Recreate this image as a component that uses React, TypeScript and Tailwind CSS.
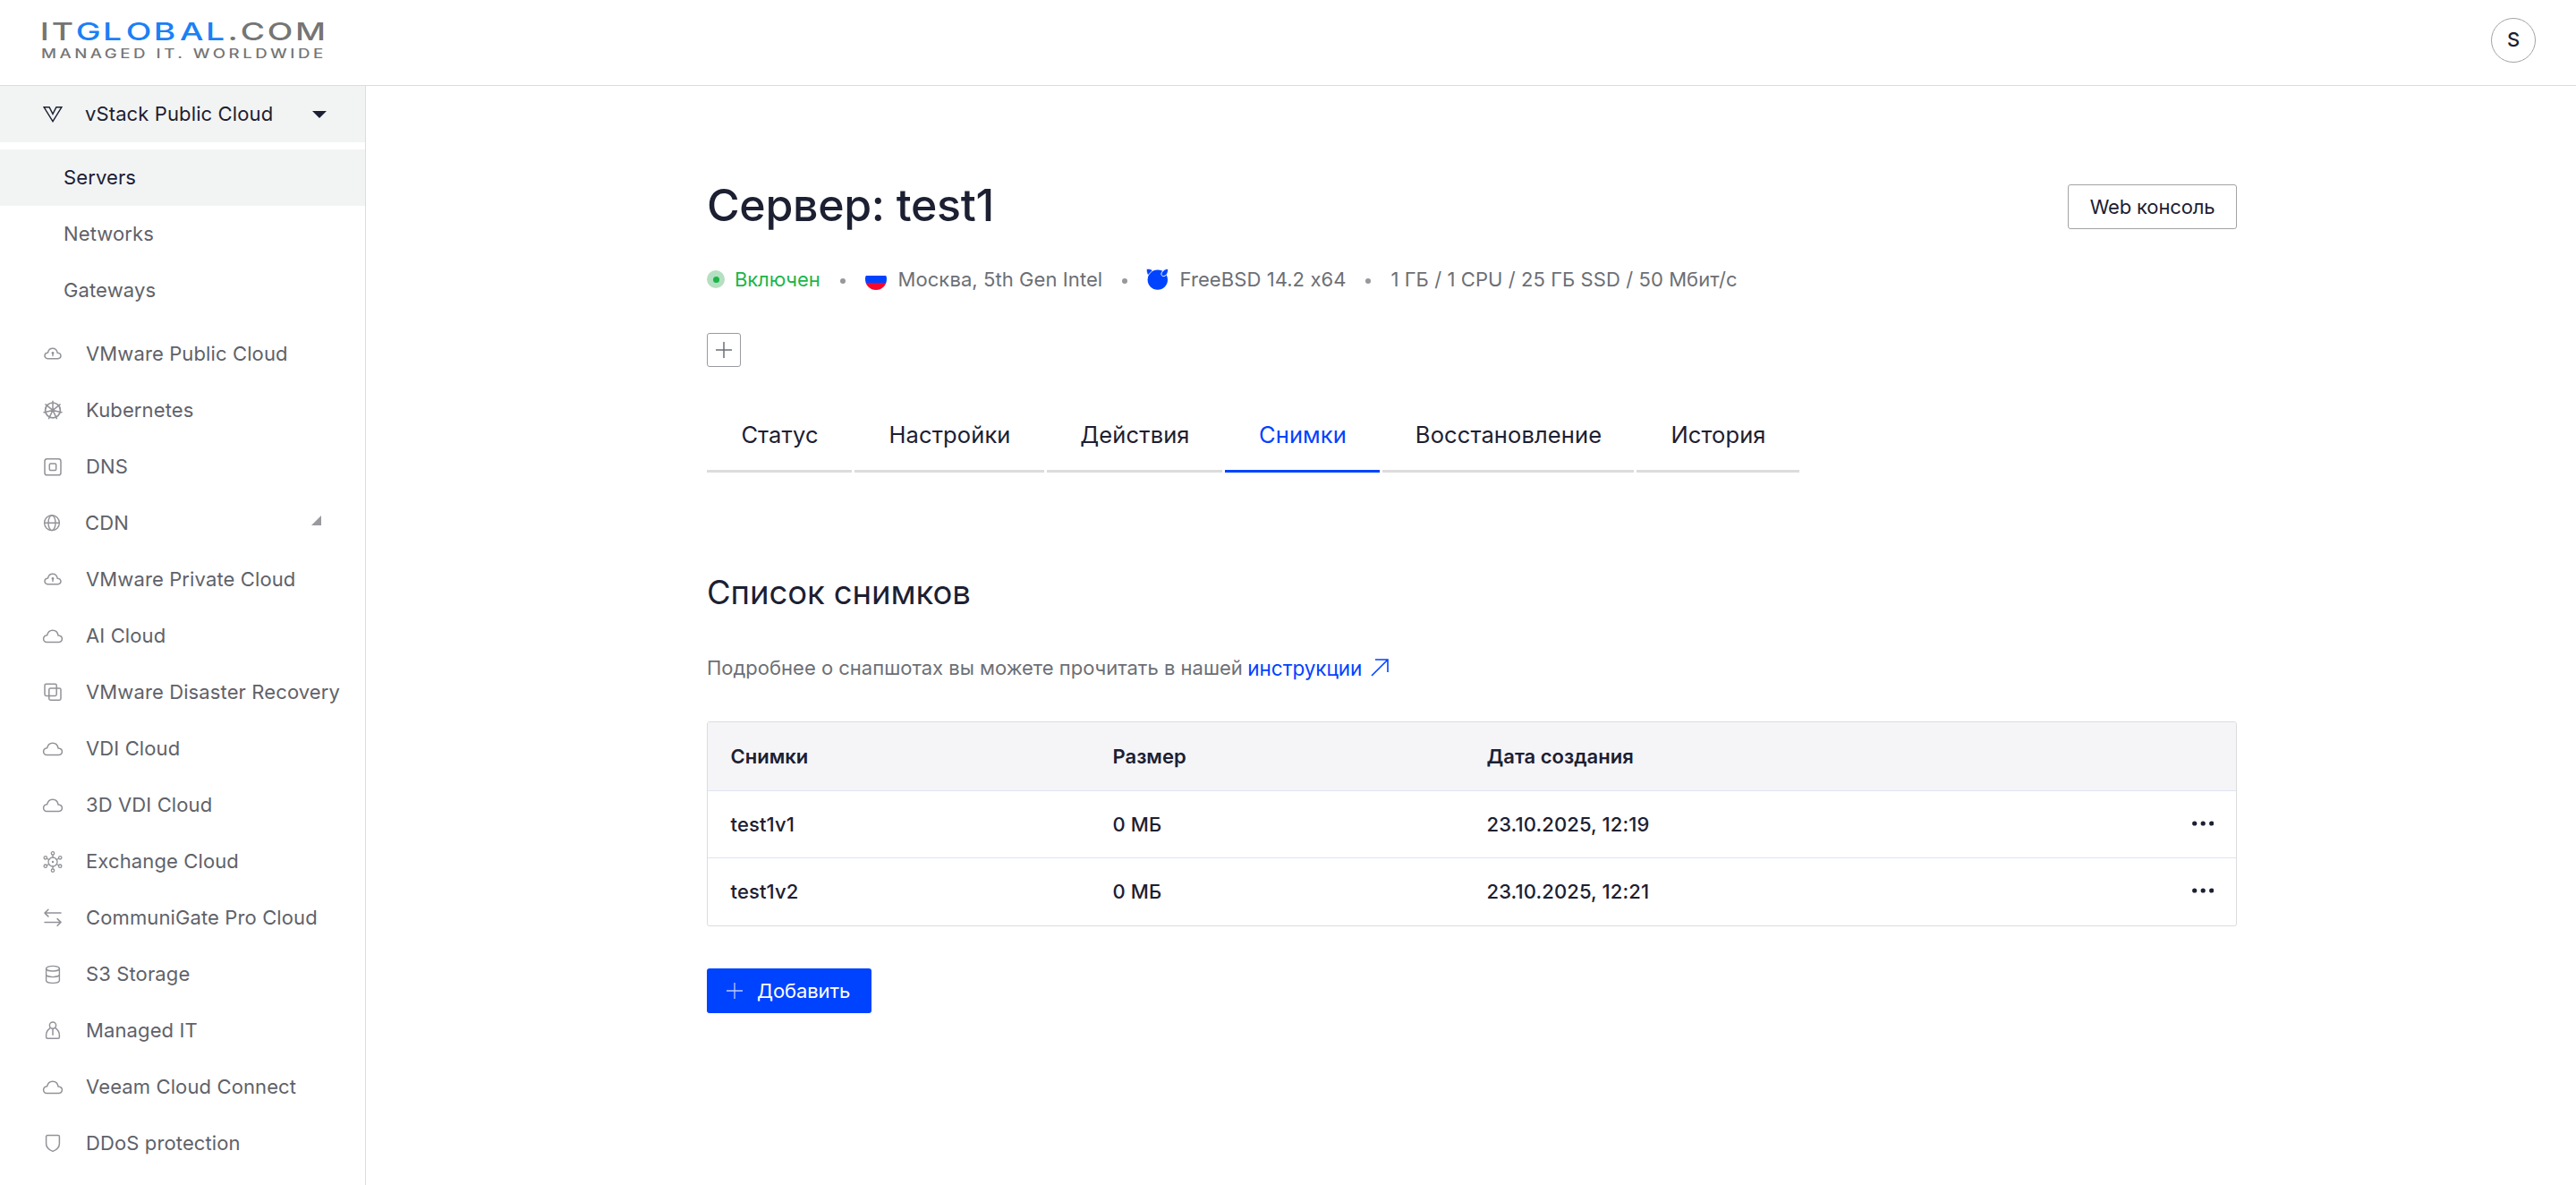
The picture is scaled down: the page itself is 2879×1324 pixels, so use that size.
import type { ReactNode } from "react";

const cloudPath =
  "M5.2 18.4h13.6a3.7 3.7 0 0 0 3.6-3.6c0-2.2-1.8-3.6-4.3-3.8C17.5 7.7 15 5.2 11.8 5.2c-3.1 0-5.4 2.1-6.1 5.5-2.4.3-4.1 1.8-4.1 4.1a3.6 3.6 0 0 0 3.6 3.6z";

function Icon({ children }: { children: ReactNode }) {
  return (
    <svg
      width="24"
      height="24"
      viewBox="0 0 24 24"
      fill="none"
      stroke="currentColor"
      strokeWidth="1.5"
      strokeLinecap="round"
      strokeLinejoin="round"
      className="shrink-0 text-[#919398]"
    >
      {children}
    </svg>
  );
}

const icons: Record<string, ReactNode> = {
  cloud: <path d={cloudPath} />,
  cloudLock: (
    <>
      <path d={cloudPath} transform="translate(1.6 0.8) scale(0.865)" strokeWidth="1.7" />
      <circle cx="12" cy="10.4" r="1.4" fill="currentColor" stroke="none" />
      <path d="M12 10.6v3" strokeWidth="1.4" />
    </>
  ),
  kubernetes: (
    <>
      <circle cx="12" cy="11.4" r="8.4" strokeWidth="1.7" />
      <circle cx="12" cy="11.4" r="1.6" fill="currentColor" stroke="none" />
      <path
        d="M12 11.4V1.3M12 11.4 3.9 4.9M12 11.4l8.1-6.5M12 11.4 2 13.7M12 11.4l10 2.3M12 11.4l-4.4 9.2M12 11.4l4.4 9.2"
        strokeWidth="1.5"
      />
    </>
  ),
  dns: (
    <>
      <rect x="3" y="2.8" width="18" height="18" rx="2.6" />
      <rect x="8.3" y="8.1" width="7.4" height="7.4" rx="1.2" />
    </>
  ),
  globe: (
    <>
      <circle cx="12" cy="11.2" r="8.4" strokeWidth="1.4" />
      <ellipse cx="12" cy="11.2" rx="4" ry="8.4" strokeWidth="1.4" />
      <path d="M3.6 11.2h16.8" strokeWidth="1.4" />
    </>
  ),
  squares: (
    <>
      <rect x="3" y="2.2" width="13.2" height="13.2" rx="1.6" />
      <rect x="7.8" y="7" width="13.2" height="13.2" rx="1.6" />
    </>
  ),
  exchange: (
    <>
      <circle cx="12" cy="12" r="5" strokeWidth="1.3" />
      <circle cx="12" cy="12" r="1.2" fill="currentColor" stroke="none" />
      <path
        d="M12 7V4M12 17v3M7.7 9.5 5.5 8.2M16.3 9.5l2.2-1.3M7.7 14.5l-2.2 1.3M16.3 14.5l2.2 1.3"
        strokeWidth="1.3"
      />
      <g strokeWidth="1.3">
        <circle cx="12" cy="2.4" r="1.7" />
        <circle cx="12" cy="21.6" r="1.7" />
        <circle cx="3.8" cy="7.3" r="1.7" />
        <circle cx="20.2" cy="7.3" r="1.7" />
        <circle cx="3.8" cy="16.7" r="1.7" />
        <circle cx="20.2" cy="16.7" r="1.7" />
      </g>
    </>
  ),
  arrows: <path d="M21 6.1H3M6.9 2.3 3 6.1l3.9 3.8M3 16.4h18M17.1 12.6l3.9 3.8-3.9 3.8" />,
  storage: (
    <>
      <ellipse cx="12" cy="5.2" rx="7.4" ry="2.8" strokeWidth="1.4" />
      <path
        d="M4.6 5.2v13.4c0 1.5 3.3 2.8 7.4 2.8s7.4-1.3 7.4-2.8V5.2M4.6 11.8c0 1.5 3.3 2.8 7.4 2.8s7.4-1.3 7.4-2.8"
        strokeWidth="1.4"
      />
    </>
  ),
  person: (
    <>
      <circle cx="12" cy="5.6" r="3.6" />
      <path d="M8.8 8.9C6.2 10.6 4.6 13.4 4.6 17v1.8c0 .9.6 1.5 1.5 1.5h11.8c.9 0 1.5-.6 1.5-1.5V17c0-3.6-1.6-6.4-4.2-8.1M12 9.4v6.8" />
    </>
  ),
  shield: (
    <path d="M6 2.6h12c.8 0 1.4.6 1.4 1.4v7.7c0 3.8-2.8 6.9-7.4 8.7-4.6-1.8-7.4-4.9-7.4-8.7V4c0-.8.6-1.4 1.4-1.4z" />
  ),
};

const subItems = [
  { label: "Servers", active: true },
  { label: "Networks", active: false },
  { label: "Gateways", active: false },
];

const services = [
  { label: "VMware Public Cloud", icon: "cloudLock" },
  { label: "Kubernetes", icon: "kubernetes" },
  { label: "DNS", icon: "dns" },
  { label: "CDN", icon: "globe", expandable: true },
  { label: "VMware Private Cloud", icon: "cloudLock" },
  { label: "AI Cloud", icon: "cloud" },
  { label: "VMware Disaster Recovery", icon: "squares" },
  { label: "VDI Cloud", icon: "cloud" },
  { label: "3D VDI Cloud", icon: "cloud" },
  { label: "Exchange Cloud", icon: "exchange" },
  { label: "CommuniGate Pro Cloud", icon: "arrows" },
  { label: "S3 Storage", icon: "storage" },
  { label: "Managed IT", icon: "person" },
  { label: "Veeam Cloud Connect", icon: "cloud" },
  { label: "DDoS protection", icon: "shield" },
];

const tabs = [
  { label: "Статус", width: "w-[162px]" },
  { label: "Настройки", width: "w-[212px]" },
  { label: "Действия", width: "w-[196px]" },
  { label: "Снимки", width: "w-[173px]", active: true },
  { label: "Восстановление", width: "w-[281px]" },
  { label: "История", width: "w-[182px]" },
];

const snapshots = [
  { name: "test1v1", size: "0 МБ", date: "23.10.2025, 12:19" },
  { name: "test1v2", size: "0 МБ", date: "23.10.2025, 12:21" },
];

function Logo() {
  return (
    <svg width="318" height="48" viewBox="0 0 318 48" className="overflow-visible">
      <g transform="translate(1 0) scale(1.35 1)" fill="#757575" fontFamily="Inter, sans-serif">
        <text y="25" fontSize="27.6" fontWeight="500">
          <tspan x="-1.7 8">IT</tspan>
          <tspan x="28 50.3 69.5 92.5 114.1 135.5" fill="#1b80f5">GLOBAL</tspan>
          <tspan x="153.7 164.3 186.5 209.6">.COM</tspan>
        </text>
        <text x="-0.8" y="45" fontSize="13.8" fontWeight="500" textLength="233.5" lengthAdjust="spacing">
          MANAGED IT. WORLDWIDE
        </text>
      </g>
    </svg>
  );
}

function Header() {
  return (
    <header className="flex h-24 items-start justify-between border-b border-[#dcdcdc] pt-5 pr-[45px] pl-[46px]">
      <Logo />
      <div className="flex h-[50px] w-[50px] items-center justify-center rounded-full border border-[#a3a3a3] pb-px text-[22px] font-medium">
        S
      </div>
    </header>
  );
}

function Sidebar() {
  return (
    <aside className="h-[1228px] w-[409px] shrink-0 border-r border-[#dcdcdc] text-[22px] tracking-[0.12px] text-[#5f6269]">
      <div className="flex h-[63px] items-center bg-[#f2f4f4] pl-12 text-[#1c2032]">
        <svg width="22" height="18" viewBox="0 0 22 18" fill="none" stroke="currentColor" strokeWidth="1.4">
          <path d="M1.2.8h5.9L11 8.4 14.9.8h5.9L11 16.6z" />
        </svg>
        <span className="ml-[25px] w-[254px]">vStack Public Cloud</span>
        <svg width="16" height="8" viewBox="0 0 16 8">
          <path d="M0 0h16L8 8z" fill="currentColor" />
        </svg>
      </div>

      <nav className="mt-2">
        {subItems.map((item) => (
          <div
            key={item.label}
            className={`flex h-[63px] items-center pl-[71px] ${item.active ? "bg-[#f2f4f4] text-[#1c2032]" : ""}`}
          >
            {item.label}
          </div>
        ))}
      </nav>

      <nav className="mt-2">
        {services.map((item) => (
          <div
            key={item.label}
            className={`flex h-[63px] items-center gap-[25px] ${item.expandable ? "pl-[46px]" : "pl-[47px]"}`}
          >
            <Icon>{icons[item.icon]}</Icon>
            <span className={item.expandable ? "-ml-px w-[232px] pl-px" : "whitespace-nowrap"}>{item.label}</span>
            {item.expandable && (
              <svg width="11" height="11" viewBox="0 0 11 11" className="-mt-1.5 -ml-[3px]">
                <path d="M11 0v11H0z" fill="#999a9f" />
              </svg>
            )}
          </div>
        ))}
      </nav>
    </aside>
  );
}

function Separator() {
  return <span className="mt-1 mr-[21.5px] h-1.5 w-1.5 rounded-full bg-[#97989c]" />;
}

function ServerInfo() {
  return (
    <div className="mt-[38px] flex h-9 items-center text-[22px] tracking-[0.08px] whitespace-nowrap text-[#6c6f75]">
      <div className="flex w-[149px] items-center gap-[11px] tracking-[-0.1px] text-[#1cb54a]">
        <span className="flex h-5 w-5 items-center justify-center rounded-full bg-[#b5dfc1]">
          <span className="h-[7px] w-[7px] rounded-full bg-[#1cb54a]" />
        </span>
        <span className="pt-px">Включен</span>
      </div>
      <Separator />
      <div className="flex w-[287px] items-center gap-[13px]">
        <span className="flex h-6 w-6 flex-col overflow-hidden rounded-full">
          <span className="h-2 bg-white" />
          <span className="h-2 bg-[#0043ff]" />
          <span className="h-2 bg-[#fb0529]" />
        </span>
        <span className="pt-px">Москва, 5th Gen Intel</span>
      </div>
      <Separator />
      <div className="flex w-[245px] items-center gap-[12.5px]">
        <svg width="25" height="24" viewBox="0 0 25 24" fill="#0043ff">
          <circle cx="12.8" cy="12.6" r="11.2" />
          <path d="M.6.6C2.8.2 5.6.8 7.2 2L2 7.4C.8 5.4.2 2.6.6.6z" stroke="#fff" strokeWidth=".6" />
          <path d="M24.4.4c.6 3-1 7.6-4.6 8.2-2.4.2-3.6-1.8-2.6-3.8C18.6 2 21.8.1 24.4.4z" stroke="#fff" strokeWidth="1" />
        </svg>
        <span className="pt-px">FreeBSD 14.2 x64</span>
      </div>
      <Separator />
      <div className="pt-px pl-px">1 ГБ / 1 CPU / 25 ГБ SSD / 50 Мбит/с</div>
    </div>
  );
}

function Tabs() {
  return (
    <div className="mt-[37px] flex gap-[3px] text-[25.5px] tracking-[0.12px]">
      {tabs.map((tab) => (
        <div
          key={tab.label}
          className={`flex h-[81px] items-center justify-center border-b-[3px] pt-px pl-px ${tab.width} ${
            tab.active ? "border-[#0043ff] text-[#0043ff]" : "border-[#dcdcdc]"
          }`}
        >
          {tab.label}
        </div>
      ))}
    </div>
  );
}

function SnapshotTable() {
  return (
    <div className="mt-11 overflow-hidden rounded-[3px] border border-[#dcdcdc] text-[22px]">
      <div className="grid h-[77px] grid-cols-[427px_418px_1fr] items-center border-b border-[#dde5f0] bg-[#f5f5f8] pt-px pl-[25.5px] font-semibold">
        <span>Снимки</span>
        <span>Размер</span>
        <span>Дата создания</span>
      </div>
      {snapshots.map((row) => (
        <div
          key={row.name}
          className="grid h-[75px] grid-cols-[427px_418px_1fr_49px] items-center border-b border-[#dde5f0] pl-[25.5px] font-medium tracking-[0.12px] last:border-b-0"
        >
          <span>{row.name}</span>
          <span>{row.size}</span>
          <span>{row.date}</span>
          <svg width="24" height="6" viewBox="0 0 24 6" fill="#1c2032" className="-mt-[3px]">
            <circle cx="2.7" cy="3" r="2.6" />
            <circle cx="12.2" cy="3" r="2.6" />
            <circle cx="21.7" cy="3" r="2.6" />
          </svg>
        </div>
      ))}
    </div>
  );
}

export default function App() {
  return (
    <div className="h-[1324px] overflow-hidden bg-white font-['Inter',sans-serif] text-[#1c2032] [font-feature-settings:'calt'_0]">
      <Header />
      <div className="flex">
        <Sidebar />
        <main className="ml-[381px] w-[1710px] pt-[110px]">
          <div className="flex h-[50px] items-center justify-between">
            <h1 className="pb-1 text-[50px] leading-none font-medium tracking-[-0.3px]">Сервер: test1</h1>
            <button className="flex h-[50px] w-[189px] items-center justify-center rounded-[3px] border border-[#a3a3a3] pt-px text-[22px] tracking-[-0.15px]">
              Web консоль
            </button>
          </div>

          <ServerInfo />

          <button className="mt-[42px] flex h-[38px] w-[38px] items-center justify-center rounded-[3px] border border-[#999a9f]">
            <svg width="18" height="18" viewBox="0 0 18 18" stroke="#6c6f75" strokeWidth="1.5">
              <path d="M9 0v18M0 9h18" />
            </svg>
          </button>

          <Tabs />

          <h2 className="mt-[106px] flex h-[54px] items-center pt-0.5 text-[36.5px] tracking-[-0.1px]">Список снимков</h2>

          <p className="mt-[42px] flex h-8 items-center text-[22px] text-[#6c6f75]">
            <span className="pt-px">Подробнее о снапшотах вы можете прочитать в нашей</span>
            <a className="ml-[5.5px] flex items-center gap-2.5 text-[22.5px] tracking-[-0.05px] text-[#0043ff]">
              <span className="pt-px">инструкции</span>
              <svg width="20" height="20" viewBox="0 0 20 20" fill="none" stroke="currentColor" strokeWidth="1.6">
                <path d="M1 19 18.8 1.2M5 1h14v14" />
              </svg>
            </a>
          </p>

          <SnapshotTable />

          <button className="mt-[47px] flex h-[50px] w-[184px] items-center rounded-[3px] bg-[#0043ff] pl-[22px] text-[22px] tracking-[-0.1px] text-white">
            <svg width="18" height="18" viewBox="0 0 18 18" stroke="#b8ccff" strokeWidth="1.3">
              <path d="M9 0v18M0 9h18" />
            </svg>
            <span className="ml-4 pt-px">Добавить</span>
          </button>
        </main>
      </div>
    </div>
  );
}
